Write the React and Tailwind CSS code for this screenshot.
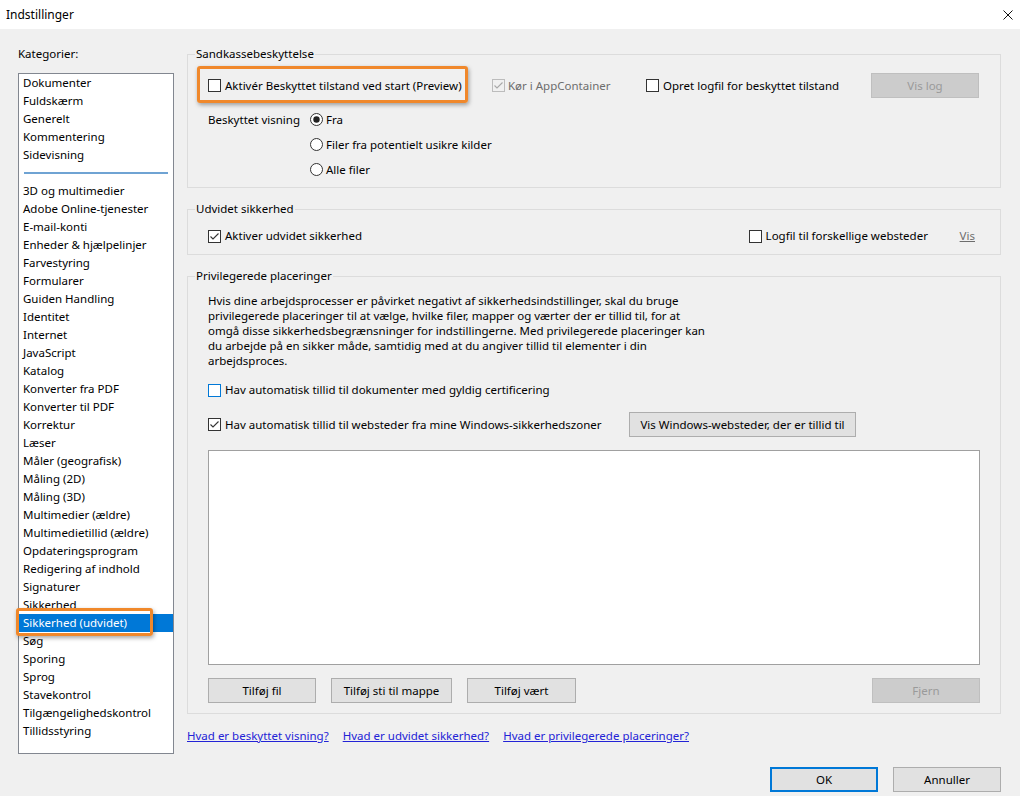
import React from "react";

function Check({ checked = false, disabled = false, focus = false }) {
  const stroke = disabled ? "#bcbcbc" : focus ? "#0078d7" : "#333333";
  return (
    <svg width="13" height="13" viewBox="0 0 13 13" className="shrink-0">
      <rect x="0.5" y="0.5" width="12" height="12" fill={disabled ? "none" : "#ffffff"} stroke={stroke} />
      {checked && (
        <path d="M2.5 6.5 L5 9 L10.5 3.5" fill="none" stroke={disabled ? "#a8a8a8" : "#333333"} strokeWidth="1.1" />
      )}
    </svg>
  );
}

function Radio({ checked = false }) {
  return (
    <svg width="13" height="13" viewBox="0 0 13 13" className="shrink-0">
      <circle cx="6.5" cy="6.5" r="6" fill="#ffffff" stroke="#333333" />
      {checked && <circle cx="6.5" cy="6.5" r="3.2" fill="#222222" />}
    </svg>
  );
}

function Btn({ children, w, disabled = false, primary = false }) {
  return (
    <div
      className={
        "h-[25px] flex items-center justify-center shrink-0 whitespace-nowrap " +
        (disabled
          ? "bg-[#cccccc] border border-[#bfbfbf] text-[#9a9a9a]"
          : primary
          ? "bg-[#e1e1e1] border-2 border-[#0078d7]"
          : "bg-[#e1e1e1] border border-[#adadad]")
      }
      style={{ width: w }}
    >
      {children}
    </div>
  );
}

const top = ["Dokumenter", "Fuldskærm", "Generelt", "Kommentering", "Sidevisning"];
const rest = [
  "3D og multimedier",
  "Adobe Online-tjenester",
  "E-mail-konti",
  "Enheder & hjælpelinjer",
  "Farvestyring",
  "Formularer",
  "Guiden Handling",
  "Identitet",
  "Internet",
  "JavaScript",
  "Katalog",
  "Konverter fra PDF",
  "Konverter til PDF",
  "Korrektur",
  "Læser",
  "Måler (geografisk)",
  "Måling (2D)",
  "Måling (3D)",
  "Multimedier (ældre)",
  "Multimedietillid (ældre)",
  "Opdateringsprogram",
  "Redigering af indhold",
  "Signaturer",
  "Sikkerhed",
  "Sikkerhed (udvidet)",
  "Søg",
  "Sporing",
  "Sprog",
  "Stavekontrol",
  "Tilgængelighedskontrol",
  "Tillidsstyring",
];

function Orange({ className }) {
  return (
    <div
      className={
        "absolute border-[3px] border-[#f0882b] rounded-[3px] shadow-[1px_2px_4px_rgba(0,0,0,0.35)] pointer-events-none " +
        className
      }
    />
  );
}

export default function App() {
  return (
    <div className="w-[1020px] h-[796px] bg-[#f0f0f0] flex flex-col font-['Noto_Sans',sans-serif] text-[11.5px] text-black overflow-hidden">
      {/* Title bar */}
      <div className="h-[29px] bg-white flex items-center justify-between pl-[6px] pr-[7px] shrink-0">
        <span className="text-[12px]">Indstillinger</span>
        <svg width="10" height="10" viewBox="0 0 10 10">
          <path d="M0.5 0.5 L9.5 9.5 M9.5 0.5 L0.5 9.5" stroke="#111" strokeWidth="1" />
        </svg>
      </div>

      <div className="flex flex-1 pl-[18px] pr-[19px] pt-[17px] gap-[13px]">
        {/* Left column */}
        <div className="w-[156px] flex flex-col shrink-0">
          <div className="leading-[16px]">Kategorier:</div>
          <div className="mt-[11px] h-[681px] border border-[#828790] bg-white">
            {top.map((t) => (
              <div key={t} className="h-[18px] leading-[18px] pl-[4px] whitespace-nowrap">
                {t}
              </div>
            ))}
            <div className="h-[18px] flex items-center px-[5px]">
              <div className="h-[2px] w-full bg-[#6fa3d3]" />
            </div>
            {rest.map((t) => {
              const sel = t === "Sikkerhed (udvidet)";
              return (
                <div
                  key={t}
                  className={
                    "h-[18px] leading-[18px] pl-[4px] whitespace-nowrap relative " +
                    (sel ? "bg-[#0078d7] text-white" : "")
                  }
                >
                  {t}
                  {sel && <Orange className="left-[-3px] top-[-6px] w-[137px] h-[28px]" />}
                </div>
              );
            })}
          </div>
        </div>

        {/* Right column */}
        <div className="flex-1 flex flex-col">
          {/* Sandkassebeskyttelse */}
          <fieldset className="border border-[#dcdcdc]">
            <legend className="ml-[7px] px-[1px] leading-[16px]">Sandkassebeskyttelse</legend>
            <div className="pl-[20px] pr-[21px] pb-[5px]">
              <div className="mt-[11px] h-[25px] flex items-center">
                <div className="w-[284px] h-[16px] flex items-center gap-[4px] relative">
                  <Check />
                  <span className="whitespace-nowrap">Aktivér Beskyttet tilstand ved start (Preview)</span>
                  <Orange className="left-[-11px] top-[-12px] w-[271px] h-[37px]" />
                </div>
                <div className="w-[154px] flex items-center gap-[3px] text-[#6d6d6d]">
                  <Check checked disabled />
                  <span className="whitespace-nowrap">Kør i AppContainer</span>
                </div>
                <div className="flex items-center gap-[4px]">
                  <Check />
                  <span className="whitespace-nowrap">Opret logfil for beskyttet tilstand</span>
                </div>
                <div className="ml-auto">
                  <Btn w={108} disabled>
                    Vis log
                  </Btn>
                </div>
              </div>
              <div className="mt-[9px] flex">
                <div className="w-[102px] h-[25px] flex items-center">Beskyttet visning</div>
                <div className="flex flex-col">
                  <div className="h-[25px] flex items-center gap-[3px]">
                    <Radio checked />
                    <span>Fra</span>
                  </div>
                  <div className="h-[25px] flex items-center gap-[3px]">
                    <Radio />
                    <span>Filer fra potentielt usikre kilder</span>
                  </div>
                  <div className="h-[25px] flex items-center gap-[3px]">
                    <Radio />
                    <span>Alle filer</span>
                  </div>
                </div>
              </div>
            </div>
          </fieldset>

          {/* Udvidet sikkerhed */}
          <fieldset className="mt-[13px] border border-[#dcdcdc]">
            <legend className="ml-[7px] px-[1px] leading-[16px]">Udvidet sikkerhed</legend>
            <div className="pl-[20px] pr-[25px] pb-[8px]">
              <div className="mt-[9px] h-[20px] flex items-center">
                <div className="flex-1 flex items-center gap-[4px]">
                  <Check checked />
                  <span>Aktiver udvidet sikkerhed</span>
                </div>
                <div className="w-[211px] flex items-center gap-[4px]">
                  <Check />
                  <span className="whitespace-nowrap">Logfil til forskellige websteder</span>
                </div>
                <span className="underline text-[#6d6d6d]">Vis</span>
              </div>
            </div>
          </fieldset>

          {/* Privilegerede placeringer */}
          <fieldset className="mt-[13px] border border-[#dcdcdc]">
            <legend className="ml-[7px] px-[1px] leading-[16px]">Privilegerede placeringer</legend>
            <div className="pl-[20px] pr-[20px] pb-[10px]">
              <p className="mt-[9px] leading-[15px] whitespace-nowrap">
                Hvis dine arbejdsprocesser er påvirket negativt af sikkerhedsindstillinger, skal du bruge
                <br />
                privilegerede placeringer til at vælge, hvilke filer, mapper og værter der er tillid til, for at
                <br />
                omgå disse sikkerhedsbegrænsninger for indstillingerne. Med privilegerede placeringer kan
                <br />
                du arbejde på en sikker måde, samtidig med at du angiver tillid til elementer i din
                <br />
                arbejdsproces.
              </p>
              <div className="mt-[12px] h-[20px] flex items-center gap-[4px]">
                <Check focus />
                <span>Hav automatisk tillid til dokumenter med gyldig certificering</span>
              </div>
              <div className="mt-[12px] h-[25px] flex items-center">
                <div className="w-[421px] flex items-center gap-[4px]">
                  <Check checked />
                  <span className="whitespace-nowrap">
                    Hav automatisk tillid til websteder fra mine Windows-sikkerhedszoner
                  </span>
                </div>
                <Btn w={227}>Vis Windows-websteder, der er tillid til</Btn>
              </div>
              <div className="mt-[13px] h-[215px] bg-white border border-[#a0a0a0]" />
              <div className="mt-[13px] flex items-center gap-[15px]">
                <Btn w={108}>Tilføj fil</Btn>
                <Btn w={121}>Tilføj sti til mappe</Btn>
                <Btn w={109}>Tilføj vært</Btn>
                <div className="ml-auto">
                  <Btn w={108} disabled>
                    Fjern
                  </Btn>
                </div>
              </div>
            </div>
          </fieldset>

          {/* Links */}
          <div className="mt-[14px] leading-[16px] flex gap-[14px] text-[#2323d6]">
            <span className="underline">Hvad er beskyttet visning?</span>
            <span className="underline">Hvad er udvidet sikkerhed?</span>
            <span className="underline">Hvad er privilegerede placeringer?</span>
          </div>

          {/* Dialog buttons */}
          <div className="mt-[23px] flex justify-end gap-[15px]">
            <Btn w={108} primary>
              OK
            </Btn>
            <Btn w={108}>Annuller</Btn>
          </div>
        </div>
      </div>
    </div>
  );
}
